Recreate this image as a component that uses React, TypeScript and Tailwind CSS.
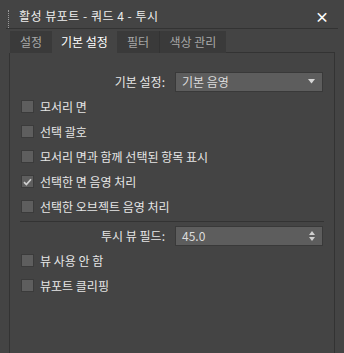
import { useState } from "react";

// 활성 뷰포트 설정 패널 — 투시 탭의 "기본 설정" 페이지.

const FONT = "font-['Noto_Sans_CJK_KR','Noto_Sans',sans-serif]";

const TABS = ["설정", "기본 설정", "필터", "색상 관리"];

type Opt = { id: string; label: string; on: boolean };

const SHADING: Opt[] = [
  { id: "edge", label: "모서리 면", on: false },
  { id: "brackets", label: "선택 괄호", on: false },
  { id: "edgeSel", label: "모서리 면과 함께 선택된 항목 표시", on: false },
  { id: "shadeFace", label: "선택한 면 음영 처리", on: true },
  { id: "shadeObj", label: "선택한 오브젝트 음영 처리", on: false },
];

const VIEW: Opt[] = [
  { id: "disable", label: "뷰 사용 안 함", on: false },
  { id: "clip", label: "뷰포트 클리핑", on: false },
];

function Check({ label, on, onToggle }: { label: string; on: boolean; onToggle: () => void }) {
  return (
    <label className="flex h-[25px] cursor-pointer items-center gap-[6px] pl-[11px]" onClick={onToggle}>
      <span className="flex h-[13px] w-[13px] shrink-0 items-center justify-center border border-[#3b3b3b] bg-[#5e5e5e]">
        {on && (
          <svg width="9" height="8" viewBox="0 0 9 8">
            <path d="M1 4.2 L3.4 6.6 L8 1.2" fill="none" stroke="#d0d0d0" strokeWidth="1.7" />
          </svg>
        )}
      </span>
      <span className="text-[12px] text-[#e6e6e6]">{label}</span>
    </label>
  );
}

function FieldRow({ label, children }: { label: string; children: React.ReactNode }) {
  return (
    <div className="flex h-[25px] items-center">
      <span className="w-[156px] pr-[1px] text-right text-[12px] text-[#e6e6e6]">{label}</span>
      <div className="ml-[9px] flex h-[20px] w-[148px] items-center justify-between border border-[#393939] bg-[#5d5d5d] pl-[6px] pr-[7px] text-[12px] text-[#dcdcdc]">
        {children}
      </div>
    </div>
  );
}

export default function App() {
  const [tab, setTab] = useState(1);
  const [vals, setVals] = useState<Record<string, boolean>>(
    Object.fromEntries([...SHADING, ...VIEW].map((o) => [o.id, o.on])),
  );
  const flip = (id: string) => setVals((v) => ({ ...v, [id]: !v[id] }));

  return (
    <div className={`${FONT} flex h-[353px] w-[344px] flex-col bg-[#444444] leading-none`}>
      {/* 제목 표시줄 */}
      <div className="mx-[6px] flex h-[29px] shrink-0 items-center border-b border-[#333333]">
        <div className="ml-[2px] mt-[9px] h-[18px] w-[1px] border-l border-dotted border-[#9a9a9a]" />
        <span className="ml-[10px] mt-[4px] text-[12px] tracking-[0.5px] text-[#eeeeee]">활성 뷰포트 - 쿼드 4 - 투시</span>
        <span className="ml-auto mr-[9px] mt-[4px] text-[14px] font-bold text-white">×</span>
      </div>

      {/* 탭 */}
      <div className="ml-[10px] mt-[2px] flex h-[22px] shrink-0 items-stretch">
        {TABS.map((t, i) => (
          <button
            key={t}
            onClick={() => setTab(i)}
            className={`flex items-center justify-center whitespace-nowrap text-[12px] ${
              i === tab ? "bg-[#444444] text-white" : "bg-[#3a3a3a] text-[#a8a8a8]"
            } ${i === 2 ? "border-r border-[#333333]" : ""}`}
            style={{ width: [42, 65, 43, 66][i] }}
          >
            {t}
          </button>
        ))}
        <div className="mr-[9px] flex-1 border-b border-[#333333]" />
      </div>

      {/* 본문 */}
      <div className="ml-[9px] mr-[9px] flex-1 border-x border-[#333333] pt-[16px]">
        <FieldRow label="기본 설정:">
          <span>기본 음영</span>
          <svg width="7" height="5" viewBox="0 0 7 5">
            <path d="M0 0 H7 L3.5 4.5 Z" fill="#d6d6d6" />
          </svg>
        </FieldRow>
        {SHADING.map((o) => (
          <Check key={o.id} label={o.label} on={vals[o.id]} onToggle={() => flip(o.id)} />
        ))}
        <div className="mx-[10px] mt-[2px] border-t border-[#333333]" />
        <div className="mt-[1px]">
          <FieldRow label="투시 뷰 필드:">
            <span>45.0</span>
            <svg width="6" height="10" viewBox="0 0 6 10">
              <path d="M3 0 L6 4 H0 Z M0 6 H6 L3 10 Z" fill="#cfcfcf" />
            </svg>
          </FieldRow>
        </div>
        {VIEW.map((o) => (
          <Check key={o.id} label={o.label} on={vals[o.id]} onToggle={() => flip(o.id)} />
        ))}
      </div>
    </div>
  );
}
